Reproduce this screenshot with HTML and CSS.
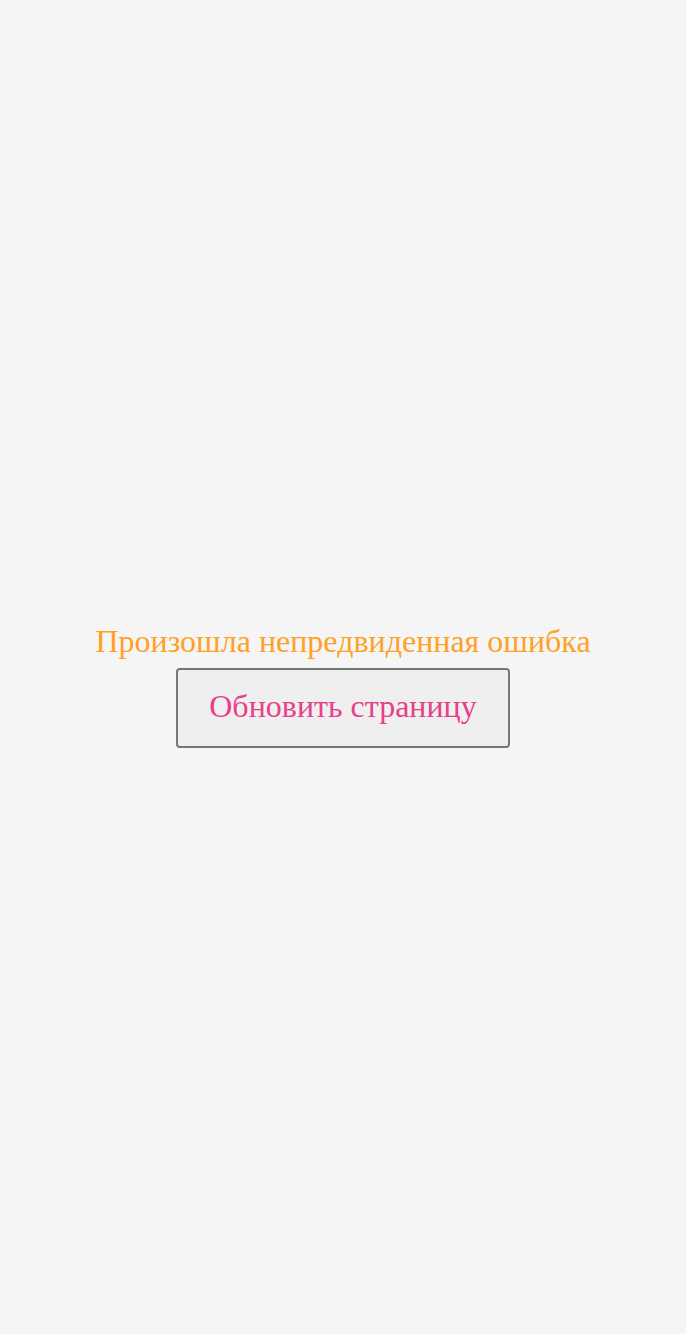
FILE: index.html
```html
<!DOCTYPE html>
<html lang="ru">
<head>
<meta charset="utf-8">
<link rel="stylesheet" href="styles.css">
</head>
<body>
<main class="error">
  <p class="error__text">Произошла непредвиденная ошибка</p>
  <button class="error__btn" type="button">Обновить страницу</button>
</main>
</body>
</html>
```
FILE: styles.css
```css
html, body {
  margin: 0;
  padding: 0;
  background: #f5f5f5;
}
.error {
  min-height: 1334px;
  display: flex;
  flex-direction: column;
  align-items: center;
  justify-content: center;
  font-family: "Liberation Serif", "Times New Roman", serif;
  padding-top: 37px;
  box-sizing: border-box;
}
.error__text {
  margin: 0 0 8px;
  font-size: 32px;
  line-height: 37px;
  color: #ffa126;
}
.error__btn {
  font-family: "Liberation Serif", "Times New Roman", serif;
  font-size: 32px;
  line-height: 37px;
  color: #e83e8c;
  background: #efefef;
  border: 2px solid #767676;
  border-radius: 4px;
  padding: 18px 31px 21px;
}
```
